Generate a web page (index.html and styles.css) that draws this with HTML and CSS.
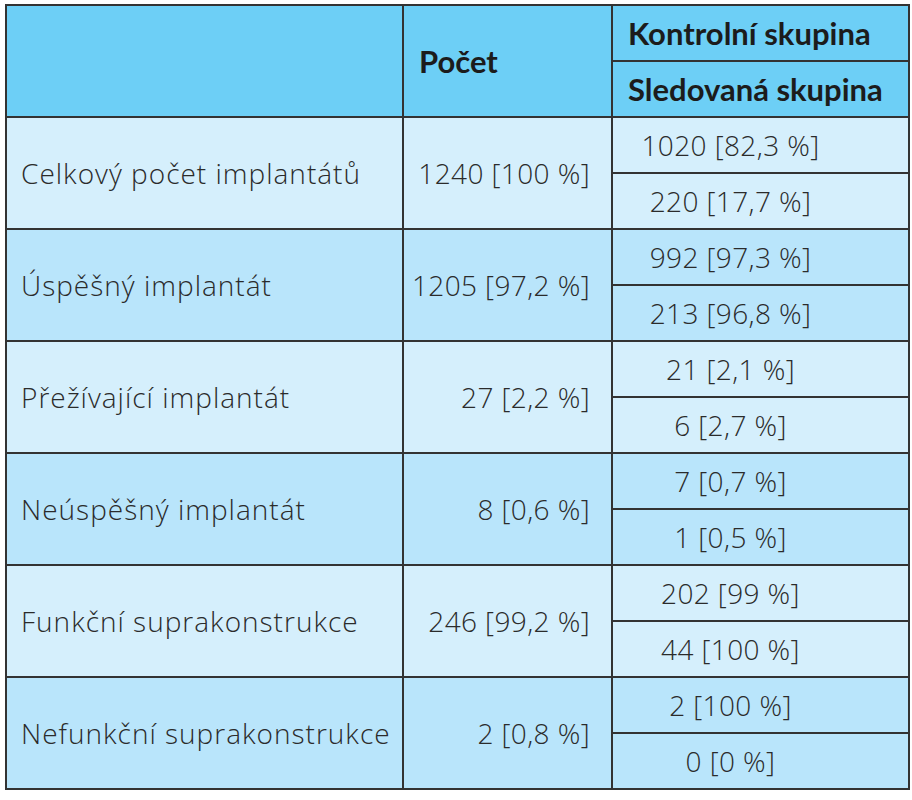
FILE: index.html
```html
<!DOCTYPE html>
<html lang="cs">
<head>
<meta charset="utf-8">
<title>Implantáty</title>
<link rel="stylesheet" href="styles.css">
</head>
<body>
<table class="data">
  <colgroup>
    <col class="c-label">
    <col class="c-count">
    <col class="c-group">
  </colgroup>
  <thead>
    <tr>
      <th class="h-empty" rowspan="2"></th>
      <th class="h-count" rowspan="2">Počet</th>
      <th class="h-group">Kontrolní skupina</th>
    </tr>
    <tr>
      <th class="h-group">Sledovaná skupina</th>
    </tr>
  </thead>
  <tbody class="light">
    <tr>
      <td class="label" rowspan="2">Celkový počet implantátů</td>
      <td class="count" rowspan="2">1240 [100 %]</td>
      <td class="group">1020 [82,3 %]</td>
    </tr>
    <tr><td class="group">220 [17,7 %]</td></tr>
  </tbody>
  <tbody class="dark">
    <tr>
      <td class="label" rowspan="2">Úspěšný implantát</td>
      <td class="count" rowspan="2">1205 [97,2 %]</td>
      <td class="group">992 [97,3 %]</td>
    </tr>
    <tr><td class="group">213 [96,8 %]</td></tr>
  </tbody>
  <tbody class="light">
    <tr>
      <td class="label" rowspan="2">Přežívající implantát</td>
      <td class="count" rowspan="2">27 [2,2 %]</td>
      <td class="group">21 [2,1 %]</td>
    </tr>
    <tr><td class="group">6 [2,7 %]</td></tr>
  </tbody>
  <tbody class="dark">
    <tr>
      <td class="label" rowspan="2">Neúspěšný implantát</td>
      <td class="count" rowspan="2">8 [0,6 %]</td>
      <td class="group">7 [0,7 %]</td>
    </tr>
    <tr><td class="group">1 [0,5 %]</td></tr>
  </tbody>
  <tbody class="light">
    <tr>
      <td class="label" rowspan="2">Funkční suprakonstrukce</td>
      <td class="count" rowspan="2">246 [99,2 %]</td>
      <td class="group">202 [99 %]</td>
    </tr>
    <tr><td class="group">44 [100 %]</td></tr>
  </tbody>
  <tbody class="dark">
    <tr>
      <td class="label" rowspan="2">Nefunkční suprakonstrukce</td>
      <td class="count" rowspan="2">2 [0,8 %]</td>
      <td class="group">2 [100 %]</td>
    </tr>
    <tr><td class="group">0 [0 %]</td></tr>
  </tbody>
</table>
</body>
</html>
```
FILE: styles.css
```css
html, body {
  margin: 0;
  padding: 0;
  background: #ffffff;
}

body {
  padding: 4px 0 0 5px;
  font-family: "Open Sans", "Liberation Sans", sans-serif;
  color: #2b2b2b;
}

.data {
  width: 903px;
  border-collapse: collapse;
  border: 2px solid #333333;
  table-layout: fixed;
}

.c-label { width: 397px; }
.c-count { width: 209px; }
.c-group { width: 297px; }

.data th,
.data td {
  border: 2px solid #333333;
  padding: 0;
  height: 54px;
  vertical-align: middle;
  white-space: nowrap;
}

.data thead th {
  background: #6dcff6;
  font-family: "Lato", "Liberation Sans", sans-serif;
  font-weight: 700;
  font-size: 31px;
  color: #1c1c1c;
  text-align: left;
}

.data .h-count { padding-left: 15px; }
.data .h-group { padding-left: 15px; }

.light td { background: #d5effc; }
.dark td { background: #b9e5fb; }

.data td {
  font-weight: 300;
  font-size: 28px;
  letter-spacing: 0.4px;
}

.data .label {
  padding-left: 14px;
  text-align: left;
  letter-spacing: 1px;
}

.data .count {
  text-align: right;
  padding-right: 21px;
}

.data .group {
  text-align: center;
  padding-right: 60px;
}
```
